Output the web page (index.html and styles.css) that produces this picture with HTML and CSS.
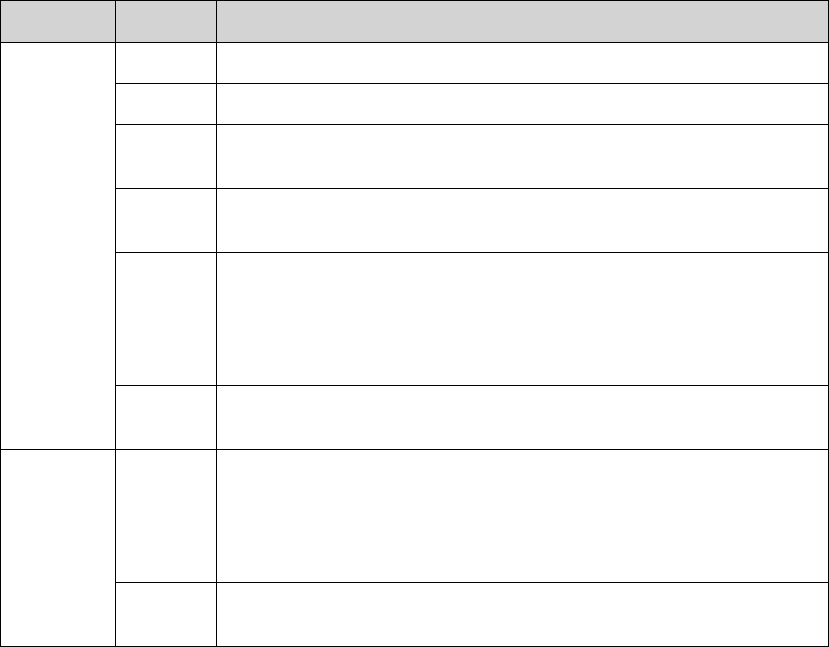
FILE: index.html
```html
<!DOCTYPE html>
<html lang="en">
<head>
<meta charset="utf-8">
<title>Table</title>
<link rel="stylesheet" href="styles.css">
</head>
<body>
<table class="grid">
  <colgroup>
    <col class="c1">
    <col class="c2">
    <col class="c3">
  </colgroup>
  <thead>
    <tr class="h-head"><th></th><th></th><th></th></tr>
  </thead>
  <tbody>
    <tr class="h-1"><td rowspan="6"></td><td></td><td></td></tr>
    <tr class="h-1"><td></td><td></td></tr>
    <tr class="h-2"><td></td><td></td></tr>
    <tr class="h-2"><td></td><td></td></tr>
    <tr class="h-6"><td></td><td></td></tr>
    <tr class="h-2"><td></td><td></td></tr>
    <tr class="h-6"><td rowspan="2"></td><td></td><td></td></tr>
    <tr class="h-2"><td></td><td></td></tr>
  </tbody>
</table>
</body>
</html>
```
FILE: styles.css
```css
html, body {
  margin: 0;
  padding: 0;
  background: #ffffff;
  font-family: "Liberation Sans", Arial, sans-serif;
  font-size: 14px;
}
.grid {
  border-collapse: collapse;
  table-layout: fixed;
  width: 828px;
}
.grid th,
.grid td {
  border: 1px solid #000000;
  padding: 0;
  vertical-align: top;
}
.grid th {
  background: #d3d3d3;
}
.c1 { width: 115px; }
.c2 { width: 101px; }
.c3 { width: 612px; }
.h-head { height: 42px; }
.h-1 { height: 41px; }
.h-2 { height: 64px; }
.h-6 { height: 133px; }
```
